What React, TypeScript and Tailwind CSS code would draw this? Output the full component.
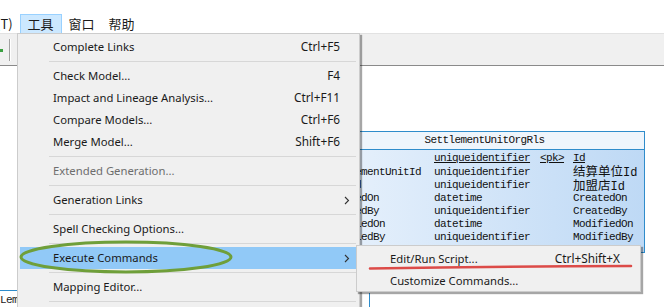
import React from "react";

type Item =
  | { kind: "sep" }
  | { kind: "item"; label: string; shortcut?: string; sub?: boolean; disabled?: boolean; active?: boolean };

const menuItems: Item[] = [
  { kind: "item", label: "Complete Links", shortcut: "Ctrl+F5" },
  { kind: "sep" },
  { kind: "item", label: "Check Model...", shortcut: "F4" },
  { kind: "item", label: "Impact and Lineage Analysis...", shortcut: "Ctrl+F11" },
  { kind: "item", label: "Compare Models...", shortcut: "Ctrl+F6" },
  { kind: "item", label: "Merge Model...", shortcut: "Shift+F6" },
  { kind: "sep" },
  { kind: "item", label: "Extended Generation...", disabled: true },
  { kind: "sep" },
  { kind: "item", label: "Generation Links", sub: true },
  { kind: "sep" },
  { kind: "item", label: "Spell Checking Options..." },
  { kind: "sep" },
  { kind: "item", label: "Execute Commands", sub: true, active: true },
  { kind: "sep" },
  { kind: "item", label: "Mapping Editor..." },
  { kind: "sep" },
];

const rows = [
  { name: "Id", type: "uniqueidentifier", pk: true, code: "Id", h: "h-[14px]" },
  { name: "SettlementUnitId", type: "uniqueidentifier", code: "结算单位Id", h: "h-[14px]" },
  { name: "ShopId", type: "uniqueidentifier", code: "加盟店Id", h: "h-[13px]" },
  { name: "CreatedOn", type: "datetime", code: "CreatedOn", h: "h-[13px]" },
  { name: "CreatedBy", type: "uniqueidentifier", code: "CreatedBy", h: "h-[13px]" },
  { name: "ModifiedOn", type: "datetime", code: "ModifiedOn", h: "h-[13px]" },
  { name: "ModifiedBy", type: "uniqueidentifier", code: "ModifiedBy", h: "h-[13px]" },
];

const ui = { fontFamily: '"Noto Sans", "Noto Sans CJK SC", sans-serif' };
const cjk = { fontFamily: '"Noto Sans CJK SC", sans-serif' };
const mono = { fontFamily: '"Liberation Mono", "Noto Sans CJK SC", monospace' };

const Chevron = () => (
  <svg width="6" height="9" viewBox="0 0 6 9" className="text-[#333]">
    <path d="M1 1 L4.5 4.5 L1 8" fill="none" stroke="currentColor" strokeWidth="1.1" />
  </svg>
);

const Code = ({ text }: { text: string }) => {
  const m = text.match(/^([\u4e00-\u9fff]+)(.*)$/);
  if (!m) return <>{text}</>;
  return (
    <>
      <span className="text-[12.5px] tracking-normal" style={cjk}>{m[1]}</span>
      <span className="text-[12px] tracking-[0px]">{m[2]}</span>
    </>
  );
};

export default function App() {
  return (
    <div className="relative w-[664px] h-[307px] overflow-hidden bg-white text-[#1a1a1a]" style={ui}>
      {/* menu bar */}
      <div className="flex items-end h-[33px] text-[13px]" style={cjk}>
        <div className="flex items-center h-[19px] -ml-[4px] pr-[7px]">(T)</div>
        <div className="flex items-center h-[19px] px-[7px] bg-[#cce8ff] border border-[#99d1ff] border-b-0">工具</div>
        <div className="flex items-center h-[19px] px-[7px]">窗口</div>
        <div className="flex items-center h-[19px] px-[7px]">帮助</div>
      </div>

      {/* toolbar */}
      <div className="flex items-center h-[33px] bg-[#f0f0f0] border-t border-[#e2e2e2] border-b border-b-[#8a8a8a]">
        <div className="w-[3px] h-[3px] bg-[#3aa040] mt-[2px]" />
        <div className="ml-[6px] w-[2px] h-[22px] border-l border-[#a0a0a0] border-r border-r-white" />
      </div>

      {/* canvas */}
      <div className="relative h-[241px]">
        <div className="absolute left-[320px] top-[65px] w-[325px] border border-[#2f8ccb] text-[11px] tracking-[-0.6px] leading-[13px] text-[#111]" style={mono}>
          <div className="h-[18px] flex items-center justify-center bg-[#eef5fc] border-b border-[#2f8ccb] pl-[4px]">SettlementUnitOrgRls</div>
          <div className="bg-gradient-to-r from-[#e9f2fc] to-[#bed9f5] pt-[1px] pb-[8px]">
            {rows.map((r) => (
              <div key={r.name} className={`flex items-center ${r.h}`}>
                <span className="pl-[4px] w-[113px] shrink-0">{r.name}</span>
                <span className={`w-[106px] shrink-0 ${r.pk ? "underline" : ""}`}>{r.type}</span>
                <span className={`w-[33px] shrink-0 ${r.pk ? "underline" : ""}`}>{r.pk ? "<pk>" : ""}</span>
                <span className={`block leading-[13px] whitespace-nowrap ${r.pk ? "underline" : ""}`}>
                  <Code text={r.code} />
                </span>
              </div>
            ))}
          </div>
        </div>
        {/* other tables peeking in */}
        <div className="absolute left-[-30px] top-[224px] w-[48px] h-[30px] border border-[#2f8ccb] bg-white text-[11px] tracking-[-0.6px] pl-[29px] pt-[1px]" style={mono}>Leme</div>
        <div className="absolute left-[369px] top-[227px] w-[200px] h-[30px] border-l border-[#2f8ccb] bg-white" />
      </div>

      {/* dropdown menu */}
      <div className="absolute left-[17px] top-[33px] w-[343px] h-[290px] bg-[#f0f0f0] border border-[#cccccc] shadow-[2px_2px_1px_rgba(0,0,0,0.35)] pt-[2px] px-[2px] text-[11.3px]">
        {menuItems.map((it, i) =>
          it.kind === "sep" ? (
            <div key={i} className="h-[7px] flex items-center pl-[29px] pr-[1px]">
              <div className="h-px w-full bg-[#d7d7d7]" />
            </div>
          ) : (
            <div
              key={i}
              className={`flex items-center h-[22px] pl-[33px] pr-[7px] ${it.active ? "bg-[#91c9f7]" : ""} ${it.disabled ? "text-[#6d6d6d]" : ""}`}
            >
              <span className="flex-1">{it.label}</span>
              {it.shortcut && <span className="mr-[10px] text-[11.8px]">{it.shortcut}</span>}
              {it.sub && <Chevron />}
            </div>
          )
        )}
      </div>

      {/* submenu */}
      <div className="absolute left-[356px] top-[245px] w-[285px] h-[47px] bg-[#f0f0f0] border border-[#cccccc] shadow-[2px_2px_1px_rgba(0,0,0,0.35)] pt-[2px] px-[2px] text-[11.3px]">
        <div className="flex items-center h-[22px] pl-[31px] pr-[18px]">
          <span className="flex-1">Edit/Run Script...</span>
          <span className="text-[11.8px]">Ctrl+Shift+X</span>
        </div>
        <div className="flex items-center h-[22px] pl-[31px]">Customize Commands...</div>
      </div>

      {/* annotations */}
      <svg className="absolute left-0 top-0 pointer-events-none" width="664" height="307">
        <ellipse cx="126" cy="257" rx="105" ry="15" fill="none" stroke="#6f9f3a" strokeWidth="3" />
        <path d="M370 268.5 Q 500 266.5 631 266" fill="none" stroke="#dc4b48" strokeWidth="2.6" strokeLinecap="round" />
      </svg>
    </div>
  );
}
